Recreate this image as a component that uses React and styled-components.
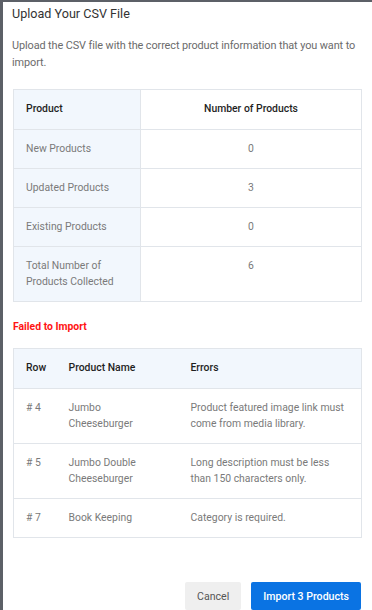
import React from 'react'
import styled, { createGlobalStyle } from 'styled-components'

const GlobalStyle = createGlobalStyle`
  html, body {
    margin: 0;
    padding: 0;
    background: #5c6067;
  }
  body {
    font-family: Roboto, 'Liberation Sans', sans-serif;
  }
`

const Panel = styled.div`
  margin: 2px 0 0 3px;
  height: 608px;
  box-sizing: border-box;
  background: #fff;
  padding: 4px 10px 0 9px;
  display: flex;
  flex-direction: column;
`

const Title = styled.h2`
  margin: 0;
  font-size: 12.6px;
  font-weight: 400;
  line-height: 16px;
  color: #333;
`

const Description = styled.p`
  margin: 16px 0 0;
  font-size: 10.9px;
  letter-spacing: -0.1px;
  line-height: 16.5px;
  color: #6b6b6b;
`

const Table = styled.table`
  width: 349px;
  margin: ${p => p.$top}px 0 0 1px;
  border-collapse: collapse;
  border: 1px solid #e1e5ea;
  font-size: 10.4px;
  line-height: 16px;
  table-layout: fixed;
`

const Cell = styled.td`
  padding: 11px 12px;
  vertical-align: top;
  color: #7a7a7a;
  border-top: 1px solid #e1e5ea;
  text-align: ${p => (p.$center ? 'center' : 'left')};
  background: ${p => (p.$label ? '#f2f7fd' : '#fff')};
  border-right: ${p => (p.$divider ? '1px solid #e1e5ea' : 'none')};
`

const HeadCell = styled.th`
  padding: 11px 12px 12px;
  font-weight: 500;
  color: #1f1f1f;
  text-align: ${p => (p.$center ? 'center' : 'left')};
  background: ${p => (p.$plain ? '#fff' : '#f2f7fd')};
  border-right: ${p => (p.$divider ? '1px solid #e1e5ea' : 'none')};
`

const FailTitle = styled.div`
  margin: 17px 0 0 1px;
  font-size: 10.4px;
  font-weight: 700;
  color: #ff1414;
  line-height: 16px;
`

const Footer = styled.div`
  margin-top: auto;
  display: flex;
  justify-content: flex-end;
  gap: 10px;
  padding-right: 1px;
`

const Button = styled.button`
  height: 28px;
  border: none;
  border-radius: 2px;
  font-family: Roboto, 'Liberation Sans', sans-serif;
  font-size: 10.6px;
  font-weight: ${p => (p.$primary ? 500 : 400)};
  padding: 0 12px;
  background: ${p => (p.$primary ? '#0a73e3' : '#efefef')};
  color: ${p => (p.$primary ? '#fff' : '#555')};
`

const summary = [
  ['New Products', '0'],
  ['Updated Products', '3'],
  ['Existing Products', '0'],
  ['Total Number of Products Collected', '6'],
]

const failures = [
  ['# 4', 'Jumbo Cheeseburger', 'Product featured image link must come from media library.'],
  ['# 5', 'Jumbo Double Cheeseburger', 'Long description must be less than 150 characters only.'],
  ['# 7', 'Book Keeping', 'Category is required.'],
]

export default function App() {
  return (
    <>
      <GlobalStyle />
      <Panel>
        <Title>Upload Your CSV File</Title>
        <Description>
          Upload the CSV file with the correct product information that you want to import.
        </Description>

        <Table $top={18}>
          <colgroup>
            <col style={{ width: 127 }} />
            <col />
          </colgroup>
          <thead>
            <tr>
              <HeadCell $divider>Product</HeadCell>
              <HeadCell $center $plain>Number of Products</HeadCell>
            </tr>
          </thead>
          <tbody>
            {summary.map(([label, value]) => (
              <tr key={label}>
                <Cell $label $divider>{label}</Cell>
                <Cell $center>{value}</Cell>
              </tr>
            ))}
          </tbody>
        </Table>

        <FailTitle>Failed to Import</FailTitle>

        <Table $top={13}>
          <colgroup>
            <col style={{ width: 43 }} />
            <col style={{ width: 122 }} />
            <col />
          </colgroup>
          <thead>
            <tr>
              <HeadCell>Row</HeadCell>
              <HeadCell>Product Name</HeadCell>
              <HeadCell>Errors</HeadCell>
            </tr>
          </thead>
          <tbody>
            {failures.map(([row, name, error]) => (
              <tr key={row}>
                <Cell>{row}</Cell>
                <Cell>{name}</Cell>
                <Cell>{error}</Cell>
              </tr>
            ))}
          </tbody>
        </Table>

        <Footer>
          <Button>Cancel</Button>
          <Button $primary>Import 3 Products</Button>
        </Footer>
      </Panel>
    </>
  )
}
